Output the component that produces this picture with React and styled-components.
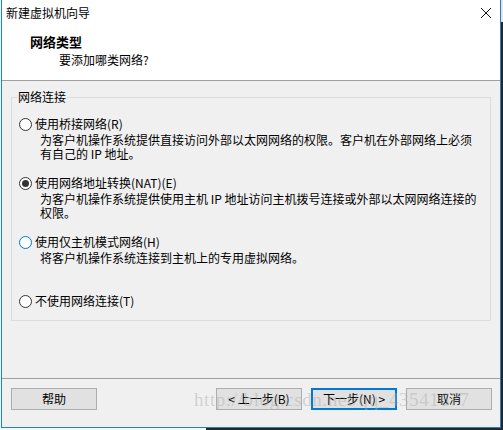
import React from "react";
import styled, { createGlobalStyle } from "styled-components";

const GlobalStyle = createGlobalStyle`
  html, body {
    margin: 0;
    padding: 0;
    background: #ffffff;
  }
  body {
    font-family: "Noto Sans CJK SC", "Noto Sans", sans-serif;
    font-size: 12px;
    color: #000;
  }
`;

const options = [
  {
    label: "使用桥接网络(R)",
    lines: [
      "为客户机操作系统提供直接访问外部以太网网络的权限。客户机在外部网络上必须",
      "有自己的 IP 地址。",
    ],
  },
  {
    label: "使用网络地址转换(NAT)(E)",
    lines: [
      "为客户机操作系统提供使用主机 IP 地址访问主机拨号连接或外部以太网网络连接的",
      "权限。",
    ],
    checked: true,
  },
  {
    label: "使用仅主机模式网络(H)",
    lines: ["将客户机操作系统连接到主机上的专用虚拟网络。"],
    hover: true,
  },
  {
    label: "不使用网络连接(T)",
    lines: [],
  },
];

function App() {
  return (
    <>
      <GlobalStyle />
      <Screen>
        <TopRow>
          <LeftGap />
          <Window>
            <TitleBar>
              <TitleText>新建虚拟机向导</TitleText>
              <CloseIcon width="12" height="12" viewBox="0 0 12 12">
                <path d="M1 1 L11 11 M11 1 L1 11" stroke="#111" strokeWidth="1" fill="none" />
              </CloseIcon>
            </TitleBar>
            <Header>
              <HeadTitle>网络类型</HeadTitle>
              <HeadSub>要添加哪类网络?</HeadSub>
            </Header>
            <Body>
              <Group>
                <Legend>网络连接</Legend>
                <OptionList>
                  {options.map((o) => (
                    <Option key={o.label}>
                      <RadioRow>
                        <Radio $checked={o.checked} $hover={o.hover} />
                        <span>{o.label}</span>
                      </RadioRow>
                      {o.lines.length > 0 && (
                        <Desc>
                          {o.lines.map((l) => (
                            <div key={l}>{l}</div>
                          ))}
                        </Desc>
                      )}
                    </Option>
                  ))}
                </OptionList>
              </Group>
            </Body>
            <Footer>
              <Button>帮助</Button>
              <Spacer />
              <ButtonGroup>
                <Button>&lt; 上一步(B)</Button>
                <Button $focus>下一步(N) &gt;</Button>
                <Button>取消</Button>
              </ButtonGroup>
              <Watermark>http://blog.csdn.net/qq_43541677</Watermark>
            </Footer>
          </Window>
          <RightEdge />
        </TopRow>
        <BottomEdge />
      </Screen>
    </>
  );
}

export default App;

const Screen = styled.div`
  width: 503px;
  height: 430px;
  display: flex;
  flex-direction: column;
  overflow: hidden;
`;

const TopRow = styled.div`
  display: flex;
  height: 428px;
`;

const LeftGap = styled.div`
  width: 1px;
  background: #f4f4f4;
`;

const RightEdge = styled.div`
  width: 2px;
  background: linear-gradient(#e4e4e4 0, #e4e4e4 22px, #262626 22px, #262626 100%);
`;

const BottomEdge = styled.div`
  height: 2px;
  background: linear-gradient(90deg, #f8f8f8 0, #f8f8f8 206px, #262626 206px, #262626 100%);
`;

const Window = styled.div`
  position: relative;
  width: 500px;
  box-sizing: border-box;
  border: 1px solid #1883d7;
  border-top: none;
  display: flex;
  flex-direction: column;
  background: #f0f0f0;
`;

const TitleBar = styled.div`
  height: 27px;
  background: #fff;
  display: flex;
  align-items: center;
  padding: 0 8px 0 4px;
`;

const TitleText = styled.div`
  flex: 1;
  line-height: 14px;
  padding-bottom: 1px;
`;

const CloseIcon = styled.svg`
  display: block;
  margin-bottom: 1px;
`;

const Header = styled.div`
  background: #fff;
  height: 54px;
  box-sizing: border-box;
  padding: 7px 0 0 28px;
  border-bottom: 1px solid #a0a0a0;
`;

const HeadTitle = styled.div`
  font-size: 13px;
  font-weight: bold;
  line-height: 16px;
`;

const HeadSub = styled.div`
  line-height: 16px;
  padding: 2px 0 0 29px;
`;

const Body = styled.div`
  flex: 1;
  padding: 9px 9px 0 9px;
`;

const Group = styled.fieldset`
  margin: 0;
  padding: 13px 7px 12px 7px;
  border: 1px solid #dcdcdc;
  min-width: 0;
`;

const Legend = styled.legend`
  padding: 0 1px;
  margin-left: -2px;
  line-height: 14px;
`;

const OptionList = styled.div`
  display: grid;
  grid-template-rows: 59px 59px 59px 14px;
`;

const Option = styled.div`
  display: flex;
  flex-direction: column;
`;

const RadioRow = styled.div`
  display: flex;
  align-items: center;
  gap: 3px;
  line-height: 14px;
  white-space: nowrap;
`;

const Radio = styled.span`
  width: 13px;
  height: 13px;
  box-sizing: border-box;
  border-radius: 50%;
  border: 1px solid ${(p) => (p.$hover ? "#0078d7" : "#333")};
  background: #fff;
  display: flex;
  align-items: center;
  justify-content: center;
  &::after {
    content: "";
    width: 7px;
    height: 7px;
    border-radius: 50%;
    background: ${(p) => (p.$checked ? "#333" : "transparent")};
  }
`;

const Desc = styled.div`
  padding: 2px 0 0 21px;
  line-height: 14px;
  white-space: nowrap;
`;

const Footer = styled.div`
  position: relative;
  height: 39px;
  border-top: 1px solid #a0a0a0;
  display: flex;
  align-items: flex-start;
  padding: 9px 8px 0 9px;
`;

const Spacer = styled.div`
  flex: 1;
`;

const ButtonGroup = styled.div`
  display: flex;
  gap: 9px;
`;

const Button = styled.button`
  width: 86px;
  height: 22px;
  box-sizing: border-box;
  font-family: inherit;
  font-size: 12px;
  color: #000;
  background: #e1e1e1;
  border: ${(p) => (p.$focus ? "2px solid #0078d7" : "1px solid #adadad")};
  padding: 0;
  line-height: 18px;
`;

const Watermark = styled.div`
  position: absolute;
  left: 192px;
  top: 10px;
  font-family: "Liberation Serif", serif;
  font-size: 19px;
  letter-spacing: 0.6px;
  color: rgba(170, 170, 170, 0.45);
  pointer-events: none;
  white-space: nowrap;
`;
